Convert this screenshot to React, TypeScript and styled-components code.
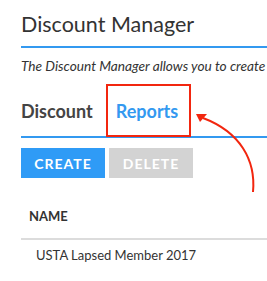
import styled, { createGlobalStyle } from "styled-components";

const GlobalStyle = createGlobalStyle`
  html, body {
    margin: 0;
    padding: 0;
    background: #fff;
    overflow: hidden;
  }
  body {
    font-family: Lato, "Open Sans", sans-serif;
    color: #333;
  }
`;

const Page = styled.div`
  position: relative;
  width: 400px;
  padding: 8px 0 0 21px;
`;

const Title = styled.h1`
  margin: 0;
  font-size: 21.5px;
  font-weight: 400;
  line-height: 32px;
  color: #333;
  padding-bottom: 6px;
  border-bottom: 2px solid #3399f0;
`;

const Intro = styled.p`
  margin: 10px 0 0;
  font-size: 13.7px;
  font-style: italic;
  line-height: 16px;
  color: #333;
  white-space: nowrap;
`;

const Tabs = styled.div`
  display: flex;
  margin-top: 10px;
  border-bottom: 2px solid #3399f0;
`;

const Tab = styled.div<{ $active?: boolean; $highlight?: boolean }>`
  position: relative;
  padding: 17px 13px 15px 10px;
  font-size: 18px;
  font-weight: 700;
  line-height: 20px;
  color: ${(p) => (p.$active ? "#3399f0" : "#444")};
  &:first-child {
    padding-left: 0;
  }
  ${(p) =>
    p.$highlight &&
    `
    &::after {
      content: "";
      position: absolute;
      left: 0;
      top: 0;
      right: 0;
      bottom: -1px;
      border: 2px solid #f2260f;
    }
  `}
`;

const Actions = styled.div`
  display: flex;
  gap: 4px;
  margin-top: 10px;
`;

const Button = styled.button<{ $disabled?: boolean }>`
  width: 84px;
  height: 30px;
  border: none;
  padding: 0;
  font-family: Lato, sans-serif;
  font-size: 14px;
  font-weight: 700;
  letter-spacing: 1px;
  color: #fff;
  background: ${(p) => (p.$disabled ? "#d3d3d3" : "#2f9bf6")};
`;

const Table = styled.div`
  margin-top: 28px;
`;

const HeadCell = styled.div`
  padding: 0 0 12px 8px;
  font-size: 13px;
  font-weight: 700;
  line-height: 20px;
  color: #333;
  border-bottom: 2px solid #dcdcdc;
`;

const Cell = styled.div`
  padding: 6px 0 0 15px;
  font-size: 13px;
  line-height: 18px;
  color: #333;
`;

const Arrow = styled.svg`
  position: absolute;
  left: 0;
  top: 0;
  pointer-events: none;
`;

export default function App() {
  return (
    <Page>
      <GlobalStyle />
      <Title>Discount Manager</Title>
      <Intro>The Discount Manager allows you to create</Intro>
      <Tabs>
        <Tab>Discount</Tab>
        <Tab $active $highlight>
          Reports
        </Tab>
      </Tabs>
      <Actions>
        <Button>CREATE</Button>
        <Button $disabled>DELETE</Button>
      </Actions>
      <Table>
        <HeadCell>NAME</HeadCell>
        <Cell>USTA Lapsed Member 2017</Cell>
      </Table>
      <Arrow width="267" height="281" viewBox="0 0 267 281">
        <path
          d="M253 192 C256 160 240 132 203 118"
          fill="none"
          stroke="#f2260f"
          strokeWidth="2"
        />
        <polygon points="196,114 207,114 200,122" fill="#f2260f" />
      </Arrow>
    </Page>
  );
}
